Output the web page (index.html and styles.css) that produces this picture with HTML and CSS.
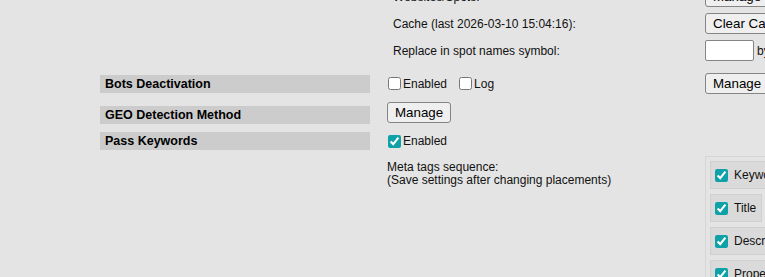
FILE: index.html
```html
<!DOCTYPE html>
<html>
    <head>
        <title>Settings</title>
        <link rel="stylesheet" href="styles.css">
    </head>
    <body>
        <div class="settings">
            <div class="row sub">
                <div></div>
                <div class="text">Websites/Spots:</div>
                <div><button class="btn">Manage</button></div>
            </div>
            <div class="row sub">
                <div></div>
                <div class="text">Cache (last 2026-03-10 15:04:16):</div>
                <div><button class="btn">Clear Cache</button></div>
            </div>
            <div class="row sub">
                <div></div>
                <div class="text">Replace in spot names symbol:</div>
                <div class="inline"><input class="field" type="text"> by</div>
            </div>

            <div class="row bots">
                <div class="label">Bots Deactivation</div>
                <div class="checks">
                    <label class="check"><input type="checkbox">Enabled</label>
                    <label class="check"><input type="checkbox">Log</label>
                </div>
                <div><button class="btn">Manage</button></div>
            </div>

            <div class="row geo">
                <div class="label">GEO Detection Method</div>
                <div><button class="btn">Manage</button></div>
                <div></div>
            </div>

            <div class="row pass">
                <div class="label">Pass Keywords</div>
                <div class="checks">
                    <label class="check"><input type="checkbox" checked>Enabled</label>
                </div>
                <div></div>
            </div>

            <div class="row meta">
                <div></div>
                <div class="note">
                    Meta tags sequence:<br>
                    (Save settings after changing placements)
                </div>
                <div class="sequence">
                    <label class="tag"><input type="checkbox" checked>Keywords</label>
                    <label class="tag"><input type="checkbox" checked>Title</label>
                    <label class="tag"><input type="checkbox" checked>Description</label>
                    <label class="tag"><input type="checkbox" checked>Properties</label>
                </div>
            </div>
        </div>
    </body>
</html>
```

FILE: styles.css
```css
html, body {
    overflow: hidden;
}

body {
    margin: 0;
    background: #e4e4e4;
    color: #111;
    font-family: "Liberation Sans", Arial, sans-serif;
    font-size: 12px;
}

.settings {
    margin-top: -17px;
    margin-left: 100px;
}

.row {
    display: grid;
    grid-template-columns: 270px 301px 300px;
    column-gap: 17px;
}

.sub {
    height: 27px;
    align-items: center;
}

.sub .text {
    padding-left: 6px;
}

.bots {
    margin-top: 9px;
    height: 21px;
    align-items: center;
}

.geo {
    margin-top: 8px;
    height: 22px;
}

.geo .label {
    align-self: end;
}

.pass {
    margin-top: 8px;
    height: 18px;
    align-items: center;
}

.meta {
    margin-top: 6px;
}

.label {
    height: 18px;
    line-height: 18px;
    padding-left: 5px;
    background: #cccccc;
    font-weight: bold;
    font-size: 12.5px;
    color: #000;
}

.btn {
    height: 21px;
    padding: 0 7px;
    background: #efefef;
    border: 1px solid #858585;
    border-radius: 3px;
    font-family: "Liberation Sans", Arial, sans-serif;
    font-size: 13.33px;
    color: #000;
}

.inline {
    display: flex;
    align-items: center;
    gap: 3px;
    white-space: nowrap;
}

.field {
    box-sizing: border-box;
    width: 49px;
    height: 21px;
    margin: 0;
    border: 1px solid #858585;
    border-radius: 2px;
    background: #fff;
}

.checks {
    display: flex;
    gap: 12px;
    padding-left: 1px;
}

.check {
    display: flex;
    align-items: center;
    gap: 2px;
}

input[type="checkbox"] {
    width: 13px;
    height: 13px;
    margin: 0;
    accent-color: #0ea2a8;
}

.note {
    padding-top: 5px;
    line-height: 13px;
}

.sequence {
    display: flex;
    flex-direction: column;
    align-items: flex-start;
    gap: 5px;
    padding: 4px;
    border: 1px solid #d6d6d6;
    min-height: 200px;
}

.tag {
    box-sizing: border-box;
    height: 28px;
    display: flex;
    align-items: center;
    gap: 6px;
    padding: 0 5px 0 4px;
    background: #dadada;
    border: 1px solid #d0d0d0;
    white-space: nowrap;
}
```
